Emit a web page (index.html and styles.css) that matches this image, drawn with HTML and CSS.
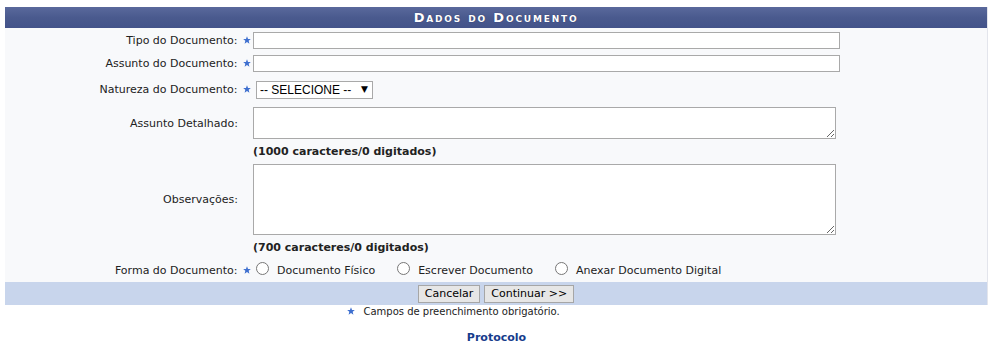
FILE: index.html
```html
<!DOCTYPE html>
<html lang="pt-BR">
<head>
    <meta charset="UTF-8">
    <meta name="viewport" content="width=device-width, initial-scale=1.0">
    <title>Protocolo - Dados do Documento</title>
    <link rel="stylesheet" href="styles.css">
</head>
<body>

    <!-- Formulario de cadastro do documento -->
    <form class="formulario">
        <div class="caption">Dados do Documento</div>

        <div class="corpo">
            <div class="row">
                <label class="rotulo">Tipo do Documento: <span class="req"><svg viewBox="0 0 10 10"><polygon points="5,0.3 6.3,3.6 9.8,3.7 7.1,5.9 8,9.6 5,7.6 2,9.6 2.9,5.9 0.2,3.7 3.7,3.6"/></svg></span></label>
                <div class="campo"><input type="text" class="texto"></div>
            </div>

            <div class="row">
                <label class="rotulo">Assunto do Documento: <span class="req"><svg viewBox="0 0 10 10"><polygon points="5,0.3 6.3,3.6 9.8,3.7 7.1,5.9 8,9.6 5,7.6 2,9.6 2.9,5.9 0.2,3.7 3.7,3.6"/></svg></span></label>
                <div class="campo"><input type="text" class="texto"></div>
            </div>

            <div class="row row-select">
                <label class="rotulo">Natureza do Documento: <span class="req"><svg viewBox="0 0 10 10"><polygon points="5,0.3 6.3,3.6 9.8,3.7 7.1,5.9 8,9.6 5,7.6 2,9.6 2.9,5.9 0.2,3.7 3.7,3.6"/></svg></span></label>
                <div class="campo">
                    <span class="select">
                        <select>
                            <option>-- SELECIONE --</option>
                        </select>
                    </span>
                </div>
            </div>

            <div class="row row-area">
                <label class="rotulo sem-req">Assunto Detalhado:</label>
                <div class="campo"><textarea class="area-detalhe"></textarea></div>
            </div>
            <div class="row row-contador">
                <span></span>
                <div class="campo contador">(1000 caracteres/0 digitados)</div>
            </div>

            <div class="row row-area">
                <label class="rotulo sem-req">Observações:</label>
                <div class="campo"><textarea class="area-obs"></textarea></div>
            </div>
            <div class="row row-contador">
                <span></span>
                <div class="campo contador">(700 caracteres/0 digitados)</div>
            </div>

            <div class="row row-radio">
                <label class="rotulo">Forma do Documento: <span class="req"><svg viewBox="0 0 10 10"><polygon points="5,0.3 6.3,3.6 9.8,3.7 7.1,5.9 8,9.6 5,7.6 2,9.6 2.9,5.9 0.2,3.7 3.7,3.6"/></svg></span></label>
                <div class="campo radios">
                    <label class="opcao"><input type="radio" name="forma"> Documento Físico</label>
                    <label class="opcao"><input type="radio" name="forma"> Escrever Documento</label>
                    <label class="opcao"><input type="radio" name="forma"> Anexar Documento Digital</label>
                </div>
            </div>
        </div>

        <div class="rodape">
            <input type="button" class="botao" value="Cancelar">
            <input type="button" class="botao" value="Continuar >>">
        </div>
    </form>

    <!-- Legenda dos campos obrigatorios -->
    <div class="obrigatorio">
        <span class="req"><svg viewBox="0 0 10 10"><polygon points="5,0.3 6.3,3.6 9.8,3.7 7.1,5.9 8,9.6 5,7.6 2,9.6 2.9,5.9 0.2,3.7 3.7,3.6"/></svg></span>
        Campos de preenchimento obrigatório.
    </div>

    <div class="modulo">
        <a href="#">Protocolo</a>
    </div>

</body>
</html>
```

FILE: styles.css
```css
body {
    margin: 0;
    padding: 7px 8px 0 5px;
    font-family: "DejaVu Sans", Verdana, sans-serif;
    font-size: 11px;
    color: #222;
    background-color: #fff;
}
.formulario {
    border-right: 1px solid #e3e5ec;
}
.caption {
    height: 21px;
    line-height: 21px;
    text-align: center;
    color: #fff;
    font-weight: bold;
    font-size: 13px;
    font-variant: small-caps;
    letter-spacing: 1.8px;
    background: linear-gradient(#5a699c, #4a5a8e 50%, #43538a);
    text-shadow: 0 0 1px #26305a;
}
.corpo {
    background-color: #f8f9fb;
    padding-top: 1px;
}
.row {
    display: grid;
    grid-template-columns: 248px 1fr;
    align-items: center;
    min-height: 23px;
}
.rotulo {
    text-align: right;
    padding-right: 2px;
}
.rotulo.sem-req {
    padding-right: 15px;
}
.req svg {
    width: 8px;
    height: 8px;
    fill: #3e6fcf;
    vertical-align: 0;
    margin-left: 2px;
}
.texto {
    box-sizing: border-box;
    width: 587px;
    height: 17px;
    border: 1px solid #a9a9a9;
    margin: 0;
    font-family: inherit;
    font-size: 11px;
}
.row-select {
    min-height: 29px;
}
.select {
    position: relative;
    display: inline-block;
    margin-left: 3px;
}
.select select {
    appearance: none;
    width: 117px;
    height: 18px;
    padding: 0 0 0 3px;
    border: 1px solid #a9a9a9;
    background-color: #fff;
    font-family: "Liberation Sans", Arial, sans-serif;
    font-size: 12px;
    color: #000;
}
.select::after {
    content: "\25BC";
    position: absolute;
    right: 5px;
    top: 3px;
    font-size: 9px;
    color: #000;
}
.row-area {
    padding: 3px 0;
}
textarea {
    box-sizing: border-box;
    width: 583px;
    border: 1px solid #a9a9a9;
    margin: 0;
    display: block;
    font-family: inherit;
}
.area-detalhe {
    height: 32px;
}
.area-obs {
    height: 71px;
}
.row-contador {
    min-height: 19px;
}
.contador {
    font-weight: bold;
}
.row-radio {
    padding-top: 2px;
}
.radios {
    display: flex;
    align-items: center;
    gap: 22px;
    padding-left: 3px;
}
.opcao {
    display: flex;
    align-items: center;
}
.opcao input {
    width: 13px;
    height: 13px;
    margin: 0 8px 4px 0;
}
.rodape {
    background-color: #c8d5ec;
    height: 23px;
    display: flex;
    align-items: center;
    justify-content: center;
    gap: 4px;
}
.botao {
    height: 18px;
    padding: 0 6px;
    margin: 0;
    border: 1px solid #a6a6a6;
    border-radius: 0;
    background-color: #e6e6e6;
    font-family: inherit;
    font-size: 11px;
    color: #000;
}
.obrigatorio {
    text-align: center;
    font-size: 10px;
    margin-top: 1px;
    padding-right: 88px;
}
.obrigatorio .req svg {
    margin-right: 5px;
}
.modulo {
    text-align: center;
    margin-top: 14px;
}
.modulo a {
    color: #163c8c;
    font-weight: bold;
    text-decoration: none;
}
```
